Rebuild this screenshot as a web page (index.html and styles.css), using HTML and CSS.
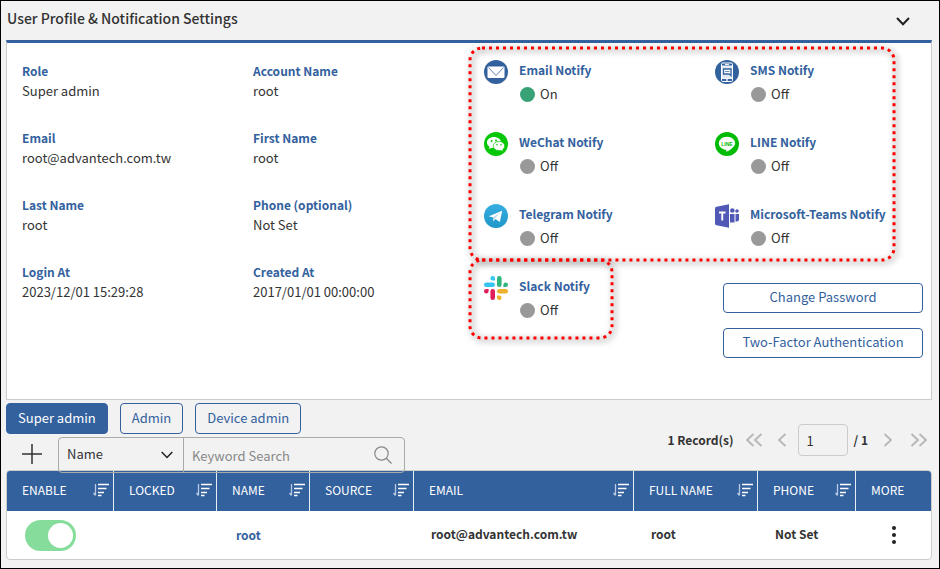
FILE: index.html
```html
<!DOCTYPE html>
<html lang="en">
<head>
<meta charset="utf-8">
<title>User Profile &amp; Notification Settings</title>
<link rel="stylesheet" href="styles.css">
</head>
<body>
<svg class="defs" aria-hidden="true">
  <symbol id="sort" viewBox="0 0 16 14">
    <path d="M2.5 1v11M0.5 10l2 2.5" stroke="#b9cae2" stroke-width="1.3" fill="none"/>
    <path d="M5 1.5h11M5 5.5h8.500M5 9.500h6M5 12.500h3.500" stroke="#fff" stroke-width="1.4" fill="none"/>
  </symbol>
</svg>
<main class="page">
  <header class="page-header">
    <h1>User Profile &amp; Notification Settings</h1>
    <button class="icon-button" aria-label="Collapse">
      <svg width="14" height="9" viewBox="0 0 14 9"><path d="M1 1l6 6.300L13 1" fill="none" stroke="#222" stroke-width="2"/></svg>
    </button>
  </header>

  <section class="card">
    <dl class="fields">
      <div><dt>Role</dt><dd>Super admin</dd></div>
      <div><dt>Account Name</dt><dd>root</dd></div>
      <div><dt>Email</dt><dd>root@advantech.com.tw</dd></div>
      <div><dt>First Name</dt><dd>root</dd></div>
      <div><dt>Last Name</dt><dd>root</dd></div>
      <div><dt>Phone (optional)</dt><dd>Not Set</dd></div>
      <div><dt>Login At</dt><dd>2023/12/01 15:29:28</dd></div>
      <div><dt>Created At</dt><dd>2017/01/01 00:00:00</dd></div>
    </dl>

    <div class="notify">
      <article class="channel">
        <svg width="24" height="24" viewBox="0 0 24 24"><circle cx="12" cy="12" r="12" fill="#33619e"/><rect x="3.500" y="6.500" width="17" height="11.500" rx="1" fill="#fff"/><path d="M4.500 7.500l7.500 8 7.500-8" fill="none" stroke="#33619e" stroke-width="0.8"/></svg>
        <div><h2>Email Notify</h2><p class="status on">On</p></div>
      </article>
      <article class="channel">
        <svg width="24" height="24" viewBox="0 0 24 24"><circle cx="12" cy="12" r="12" fill="#33619e"/><rect x="6.500" y="3" width="11" height="18.500" rx="1.200" fill="#33619e" stroke="#fff" stroke-width="1"/><rect x="7" y="6" width="10" height="12.500" fill="#dfe8f3"/><path d="M6.500 6h11M6.500 18.500h11M10 4.500h4" stroke="#fff" stroke-width="0.900"/><circle cx="12" cy="20" r="0.900" fill="#fff"/><path d="M8.500 9h7.500v6.500l-1.800-1.500H8.500z" fill="#fff" stroke="#33619e" stroke-width="1.300"/><path d="M10 11.500h4.500" stroke="#33619e" stroke-width="0.700"/></svg>
        <div><h2>SMS Notify</h2><p class="status">Off</p></div>
      </article>
      <article class="channel">
        <svg width="24" height="24" viewBox="0 0 24 24"><circle cx="12" cy="12" r="12" fill="#08c708"/><path d="M10 5c-4 0-7 2.400-7 5.500 0 1.800 1 3.200 2.500 4.200L5 17l2.600-1.300c.8.200 1.600.3 2.400.3 3.900 0 7-2.400 7-5.500S13.900 5 10 5z" fill="#fff"/><path d="M15 9.400c-3.200 0-5.800 2-5.800 4.600s2.600 4.600 5.800 4.600c.7 0 1.300-.1 1.900-.2l2.300 1.100-.5-1.900c1.300-.9 2-2.100 2-3.600 0-2.600-2.500-4.600-5.700-4.600z" fill="#fff" stroke="#08c708" stroke-width=".7"/><g fill="#08c708"><circle cx="7.600" cy="9" r="1"/><circle cx="12" cy="8.500" r="1"/><circle cx="13" cy="12.800" r=".8"/><circle cx="17" cy="12.800" r=".8"/></g></svg>
        <div><h2>WeChat Notify</h2><p class="status">Off</p></div>
      </article>
      <article class="channel">
        <svg width="24" height="24" viewBox="0 0 24 24"><circle cx="12" cy="12" r="12" fill="#00bb05"/><path d="M12 4.700c-4.600 0-8.200 2.900-8.200 6.600 0 3.300 2.900 6 6.900 6.500.9.200.7.700.6 2 .1.500 8.900-4.300 8.900-8.500 0-3.700-3.700-6.600-8.200-6.600z" fill="#fff"/><text class="line-mark" x="12" y="13.500">LINE</text></svg>
        <div><h2>LINE Notify</h2><p class="status">Off</p></div>
      </article>
      <article class="channel">
        <svg width="24" height="24" viewBox="0 0 24 24"><defs><linearGradient id="tg" x1="0" y1="0" x2="0" y2="1"><stop offset="0" stop-color="#37aee2"/><stop offset="1" stop-color="#1e96c8"/></linearGradient></defs><circle cx="12" cy="12" r="12" fill="url(#tg)"/><path d="M4.800 12.200L18.200 6.800 15.800 18l-4.300-3-2 2.300-.4-3.700z" fill="#fff"/><path d="M9.100 13.600l7.400-5.300-5.600 6.300-1.400 2.700z" fill="#bcd9ea"/></svg>
        <div><h2>Telegram Notify</h2><p class="status">Off</p></div>
      </article>
      <article class="channel">
        <svg width="24" height="24" viewBox="0 0 24 24"><g fill="#5059b5"><path d="M0 4.500Q0 3 1.500 2.700L14 .3v23.400L1.500 21.300Q0 21 0 19.500z"/><circle cx="17.300" cy="6.500" r="2.300"/><circle cx="22" cy="7" r="1.800"/><path d="M15 10h4.500v8.500H15zM20.500 10H24v5.500q0 2-3.500 2z"/></g><path d="M4 8.500h6.500M7.250 8.500v8" stroke="#fff" stroke-width="1.900" fill="none"/></svg>
        <div><h2>Microsoft-Teams Notify</h2><p class="status">Off</p></div>
      </article>
      <article class="channel">
        <svg width="24" height="24" viewBox="0 0 24 24"><g fill="#36c5f0"><rect y="6.400" width="11" height="4.600" rx="2.300"/><path d="M8.700 0a2.300 2.300 0 0 1 2.300 2.300v2.300H8.700a2.300 2.300 0 0 1 0-4.600z"/></g><g fill="#2eb67d"><rect x="13" width="4.600" height="11" rx="2.300"/><path d="M24 8.700a2.300 2.300 0 0 1-2.300 2.300h-2.300V8.700a2.300 2.300 0 0 1 4.600 0z"/></g><g fill="#ecb22e"><rect x="13" y="13" width="11" height="4.600" rx="2.300"/><path d="M15.300 24a2.300 2.300 0 0 1-2.300-2.300v-2.300h2.300a2.300 2.300 0 0 1 0 4.600z"/></g><g fill="#e01e5a"><rect x="6.400" y="13" width="4.600" height="11" rx="2.300"/><path d="M0 15.300A2.300 2.300 0 0 1 2.300 13h2.300v2.300a2.300 2.300 0 0 1-4.600 0z"/></g></svg>
        <div><h2>Slack Notify</h2><p class="status">Off</p></div>
      </article>
      <div class="account-actions">
        <button class="outline">Change Password</button>
        <button class="outline">Two-Factor Authentication</button>
      </div>
      <svg class="callout callout-main" aria-hidden="true"><rect x="2" y="2" rx="12"/></svg>
      <svg class="callout callout-slack" aria-hidden="true"><rect x="2" y="2" rx="12"/></svg>
    </div>
  </section>

  <section class="controls">
    <div class="controls-left">
      <nav class="tabs">
        <button class="tab active">Super admin</button>
        <button class="tab">Admin</button>
        <button class="tab">Device admin</button>
      </nav>
      <form class="search">
        <button type="button" class="icon-button add" aria-label="Add">
          <svg width="20" height="20" viewBox="0 0 20 20"><path d="M10 0v20M0 10h20" stroke="#333" stroke-width="1.500"/></svg>
        </button>
        <div class="search-box">
          <div class="select-wrap">
            <select aria-label="Search by"><option>Name</option><option>Email</option></select>
            <svg width="12" height="8" viewBox="0 0 12 8"><path d="M.7 1L6 6.500 11.300 1" fill="none" stroke="#222" stroke-width="1.500"/></svg>
          </div>
          <input type="text" placeholder="Keyword Search" aria-label="Keyword Search">
          <button type="button" class="icon-button" aria-label="Search">
            <svg width="18" height="18" viewBox="0 0 18 18"><path d="M12 12l5.500 5.500" stroke="#888" stroke-width="1.300"/><circle cx="7.500" cy="7.500" r="6.700" fill="none" stroke="#888" stroke-width="1.200"/></svg>
          </button>
        </div>
      </form>
    </div>
    <div class="pager">
      <span>1 Record(s)</span>
      <button class="icon-button first" aria-label="First page"><svg width="16" height="14" viewBox="0 0 16 14"><path d="M7.500 1L1 7l6.500 6M15.500 1L9 7l6.500 6"/></svg></button>
      <button class="icon-button prev" aria-label="Previous page"><svg width="8" height="14" viewBox="0 0 8 14"><path d="M7.500 1L1 7l6.500 6"/></svg></button>
      <input type="text" value="1" aria-label="Page">
      <span>/ 1</span>
      <button class="icon-button next" aria-label="Next page"><svg width="8" height="14" viewBox="0 0 8 14"><path d="M.5 1L7 7 .5 13"/></svg></button>
      <button class="icon-button last" aria-label="Last page"><svg width="16" height="14" viewBox="0 0 16 14"><path d="M.5 1L7 7 .5 13M8.500 1L15 7l-6.500 6"/></svg></button>
    </div>
  </section>

  <div class="table-frame">
    <table>
      <colgroup><col class="c-enable"><col class="c-locked"><col class="c-name"><col class="c-source"><col class="c-email"><col class="c-full"><col class="c-phone"><col class="c-more"></colgroup>
      <thead>
        <tr>
          <th><div>ENABLE<svg><use href="#sort"/></svg></div></th>
          <th><div>LOCKED<svg><use href="#sort"/></svg></div></th>
          <th><div>NAME<svg><use href="#sort"/></svg></div></th>
          <th><div>SOURCE<svg><use href="#sort"/></svg></div></th>
          <th><div>EMAIL<svg><use href="#sort"/></svg></div></th>
          <th><div>FULL NAME<svg><use href="#sort"/></svg></div></th>
          <th><div>PHONE<svg><use href="#sort"/></svg></div></th>
          <th><div>MORE</div></th>
        </tr>
      </thead>
      <tbody>
        <tr>
          <td><input class="toggle" type="checkbox" checked aria-label="Enable root"></td>
          <td></td>
          <td class="name"><a href="#root">root</a></td>
          <td></td>
          <td>root@advantech.com.tw</td>
          <td>root</td>
          <td>Not Set</td>
          <td class="more"><button class="icon-button" aria-label="More"><svg width="6" height="20" viewBox="0 0 6 20" fill="#222"><circle cx="3" cy="3" r="2"/><circle cx="3" cy="10" r="2"/><circle cx="3" cy="17" r="2"/></svg></button></td>
        </tr>
      </tbody>
    </table>
  </div>
</main>
</body>
</html>
```
FILE: styles.css
```css
* { box-sizing: border-box; }
html { height: 100%; }
body {
  margin: 0;
  min-height: 100%;
  display: flex;
  background: #f2f2f2;
  border: 1px solid #000;
  color: #333;
  font: 13px/20px "Noto Sans CJK TC", "Noto Sans", sans-serif;
}
h1, h2, p, dl, dd { margin: 0; }
button, input, select { font: inherit; color: inherit; }
svg { display: block; }
.defs { position: absolute; width: 0; height: 0; }
.page { flex: 1; min-width: 0; padding: 0 7px 7px 5px; }

.icon-button {
  border: 0;
  padding: 0;
  background: none;
  display: flex;
  align-items: center;
}
.page-header {
  height: 39px;
  padding: 0 22px 0 1px;
  display: flex;
  align-items: center;
  justify-content: space-between;
}
h1 { padding-bottom: 5px; font-size: 14px; font-weight: 500; line-height: 20px; }
.page-header .icon-button { padding-top: 2px; }

.card {
  display: grid;
  grid-template-columns: 1fr 1fr;
  min-height: 360px;
  background: #fff;
  border: 1px solid #ccc;
  border-top: 3px solid #33619e;
}
.fields {
  display: grid;
  grid-template-columns: 1fr 1fr;
  align-content: start;
  row-gap: 27px;
  padding-top: 18px;
}
.fields > div { padding-left: 15px; }
dt, h2 {
  font-size: 12px;
  font-weight: 700;
  line-height: 20px;
  color: #33619e;
}

.notify {
  position: relative;
  display: grid;
  grid-template-columns: 1fr 1fr;
  grid-auto-rows: 72px;
  align-content: start;
  padding-top: 17px;
}
.channel { display: flex; align-items: flex-start; gap: 11px; padding-left: 15px; }
.status { display: flex; align-items: center; gap: 5px; padding: 4px 0 0 1px; }
.channel h2 { line-height: 20px; padding-top: 0; }
.status::before {
  content: "";
  width: 15px;
  height: 15px;
  border-radius: 50%;
  background: #999;
}
.status.on::before { background: #38a277; }
.line-mark { font: bold 5px "Liberation Sans", sans-serif; fill: #00bb05; text-anchor: middle; }

.account-actions {
  display: flex;
  flex-direction: column;
  gap: 15px;
  padding: 7px 8px 0 23px;
}
.outline, .tab {
  border: 1px solid #33619e;
  border-radius: 4px;
  background: #fff;
  color: #33619e;
}
.outline { height: 30px; padding: 0 0 2px; flex: none; }

.callout {
  position: absolute;
  overflow: visible;
  filter: drop-shadow(2px 2px 3px rgba(0, 0, 0, 0.7));
}
.callout rect {
  width: calc(100% - 4px);
  height: calc(100% - 4px);
  fill: none;
  stroke: #f00;
  stroke-width: 3;
  stroke-dasharray: 3 4;
}
.callout-main { left: -1px; top: 3px; width: calc(100% - 34px); height: 216px; }
.callout-slack { left: -1px; top: 215px; width: 146px; height: 82px; }

.controls { display: flex; justify-content: space-between; padding-top: 3px; }
.tabs { display: flex; gap: 12px; }
.tab { height: 31px; padding: 0 11px 2px; background: transparent; }
.tab.active { background: #33619e; color: #fff; }
.search { display: flex; align-items: center; padding: 3px 0 0 16px; gap: 16px; }
.search-box {
  position: relative;
  z-index: 1;
  display: flex;
  width: 347px;
  height: 36px;
  margin-bottom: -3px;
  border: 1px solid #aaa;
  border-radius: 4px;
}
.select-wrap {
  display: flex;
  align-items: center;
  width: 125px;
  padding-right: 10px;
  border-right: 1px solid #aaa;
}
select { flex: 1; min-width: 0; border: 0; padding: 0 8px 2px; background: none; appearance: none; }
.search-box input { flex: 1; min-width: 0; border: 0; padding: 1px 8px 0; background: none; }
.search-box > .icon-button { padding-right: 12px; }
input::placeholder { color: #888; opacity: 1; }

.pager { display: flex; align-items: center; height: 32px; margin-top: 21px; padding-right: 5px; font-size: 12px; font-weight: 700; }
.pager path { fill: none; stroke: #b5b5b5; stroke-width: 1.8; }
.pager input {
  width: 50px;
  height: 32px;
  margin: 0 6px 0 12px;
  padding: 0 8px;
  border: 1px solid #ccc;
  border-radius: 4px;
  background: none;
  font-size: 13px;
  font-weight: 400;
}
.first { margin-left: 12px; }
.prev { margin-left: 16px; }
.next { margin-left: 16px; }
.last { margin-left: 19px; }

.table-frame { border: 1px solid #ccc; border-radius: 4px; overflow: hidden; background: #fff; }
table { width: 100%; table-layout: fixed; border-collapse: separate; border-spacing: 0; }
.c-enable { width: 107px; }
.c-locked { width: 103px; }
.c-name { width: 93px; }
.c-source { width: 104px; }
.c-full { width: 124px; }
.c-phone { width: 98px; }
.c-more { width: 75px; }
th {
  height: 40px;
  padding: 0 4px 2px 15px;
  background: #33619e;
  border-right: 1px solid #e6eef8;
  color: #fff;
  font-size: 12px;
  font-weight: 400;
  text-align: left;
}
th:last-child { border-right: 0; }
th div { display: flex; align-items: center; justify-content: space-between; }
th svg { width: 16px; height: 14px; }
td { height: 48px; padding: 0 17px 2px; font-size: 12px; font-weight: 700; }
td:first-child { padding: 0 18px; }
.name { padding: 0 19px; }
.name a { color: #33619e; text-decoration: none; }
.more { padding: 0; }
.more .icon-button { margin: 0 auto; }
.toggle {
  appearance: none;
  display: flex;
  width: 51px;
  height: 31px;
  margin: 0;
  padding: 3px;
  border-radius: 16px;
  background: #86dd9b;
  justify-content: flex-end;
}
.toggle::before { content: ""; width: 25px; height: 25px; border-radius: 50%; background: #fff; }
```
